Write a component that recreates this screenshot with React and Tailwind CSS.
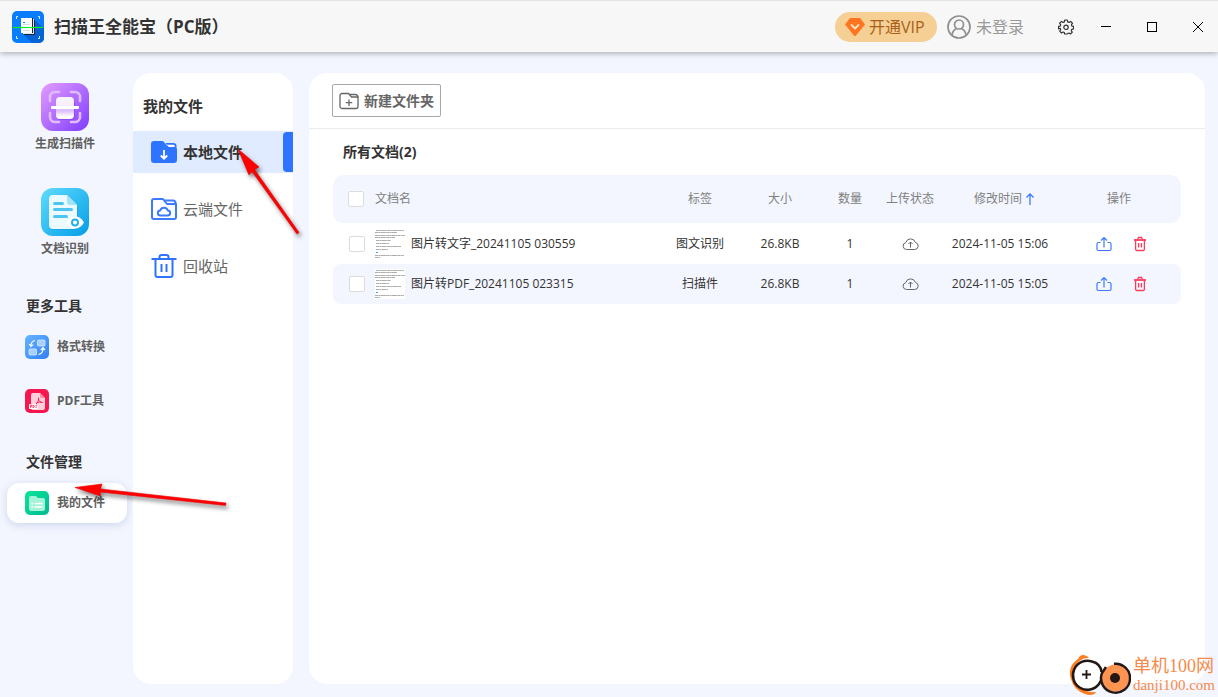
import React, { useState } from 'react';

const tools = [
  { id: 'scan', title: '生成扫描件' },
  { id: 'ocr', title: '文档识别' },
];

const folders = [
  { id: 'local', title: '本地文件' },
  { id: 'cloud', title: '云端文件' },
  { id: 'trash', title: '回收站' },
];

const files = [
  { id: 1, name: '图片转文字_20241105 030559', tag: '图文识别', size: '26.8KB', count: 1, time: '2024-11-05 15:06' },
  { id: 2, name: '图片转PDF_20241105 023315', tag: '扫描件', size: '26.8KB', count: 1, time: '2024-11-05 15:05' },
];

const LogoIcon = () => (
  <svg viewBox="0 0 32 32" className="size-8" aria-hidden="true">
    <rect width="32" height="32" rx="5" fill="#0a7dff" />
    <path d="M21 8l11 9v10a5 5 0 0 1-5 5h-7l-8-8z" fill="#0663d6" />
    <path d="M12 9h11v15H12z" fill="#1b2434" />
    <path d="M11 8h11v15H11z" fill="#dfe6ef" />
    <path d="M9 7h11v15H9z" fill="#fff" />
    <path d="M20 7h1v15h-1z" fill="#1b2434" />
    <path d="M11 11.500h2" stroke="#0a7dff" />
    <path d="M11 19.500h7M11 13.500h7" stroke="#d5dbe3" />
    <path d="M4.500 8V5.500H6M26 5.500h1.500V8M4.500 25v2.500H6M26 27.500h1.500V25" fill="none" stroke="#d5ecff" />
    <path d="M1 16.500h30" stroke="#00f020" strokeWidth="1.200" />
  </svg>
);

const ScanIcon = () => (
  <svg viewBox="0 0 48 48" className="size-12" aria-hidden="true">
    <defs>
      <linearGradient id="scanBg" x1="0" y1="0" x2="1" y2="1">
        <stop offset="0" stopColor="#e49cff" />
        <stop offset="1" stopColor="#7f3dff" />
      </linearGradient>
      <linearGradient id="scanPage" x1="0" y1="0" x2="0" y2="1">
        <stop offset="0" stopColor="#fbf5ff" />
        <stop offset="0.5" stopColor="#f4eaff" />
        <stop offset="0.6" stopColor="#d9b8ff" />
        <stop offset="0.9" stopColor="#fff" />
      </linearGradient>
    </defs>
    <rect width="48" height="48" rx="12" fill="url(#scanBg)" />
    <path d="M9 18v-4a5 5 0 0 1 5-5h4M30 9h4a5 5 0 0 1 5 5v4M39 30v4a5 5 0 0 1-5 5h-4M18 39h-4a5 5 0 0 1-5-5v-4" fill="none" stroke="#e0bcff" strokeWidth="2.600" strokeLinecap="round" />
    <rect x="16" y="16" width="18" height="21" rx="4" fill="#6b27d8" opacity="0.350" />
    <rect x="15" y="14" width="18" height="22" rx="4" fill="url(#scanPage)" />
    <rect x="10" y="23" width="28" height="3" rx="1" fill="#fff" />
  </svg>
);

const OcrIcon = () => (
  <svg viewBox="0 0 48 48" className="size-12" aria-hidden="true">
    <defs>
      <linearGradient id="ocrBg" x1="0" y1="0" x2="1" y2="1">
        <stop offset="0" stopColor="#5fdcfd" />
        <stop offset="1" stopColor="#059ee8" />
      </linearGradient>
    </defs>
    <rect width="48" height="48" rx="12" fill="url(#ocrBg)" />
    <path d="M12 9h15l10 10v19a4 4 0 0 1-4 4H13a4 4 0 0 1-4-4V12z" fill="#0784c9" opacity="0.300" />
    <path d="M12 7h14l10 10v20a4 4 0 0 1-4 4H12a4 4 0 0 1-4-4V11a4 4 0 0 1 4-4z" fill="#eafaff" />
    <path d="M26 7l10 10h-7a3 3 0 0 1-3-3z" fill="#a3e3f8" />
    <path d="M13.500 15.500h8M13.500 21.500h17M13.500 28.500h12" stroke="#4cc6f0" strokeWidth="3" strokeLinecap="round" />
    <path d="M25 34.500c4.500-8.500 13.500-8.500 18 0c-4.500 8-13.500 8-18 0z" fill="#fff" />
    <circle cx="34" cy="34.500" r="3" fill="none" stroke="#23b2ec" strokeWidth="2" />
  </svg>
);

const ConvertIcon = () => (
  <svg viewBox="0 0 24 24" className="size-6" aria-hidden="true">
    <defs>
      <linearGradient id="convertBg" x1="0" y1="0" x2="1" y2="1">
        <stop offset="0" stopColor="#67b4ff" />
        <stop offset="1" stopColor="#2f7ff5" />
      </linearGradient>
    </defs>
    <rect width="24" height="24" rx="5" fill="url(#convertBg)" />
    <rect x="12.500" y="5" width="7.500" height="6" rx="1" fill="#a8d0ff" stroke="#d6e9ff" strokeWidth="0.800" />
    <rect x="4" y="14" width="7.500" height="6" rx="1" fill="#a8d0ff" stroke="#d6e9ff" strokeWidth="0.800" />
    <path d="M10 5.500C7.500 6 6 7.800 6 11M4.200 9l1.800 2.400L8.200 9.600M13.500 19.500c3-.5 4.500-2.500 4.500-6M15.800 15l2.200-2.400L20 15" fill="none" stroke="#fff" strokeWidth="1.200" />
  </svg>
);

const PdfIcon = () => (
  <svg viewBox="0 0 24 24" className="size-6" aria-hidden="true">
    <rect width="24" height="24" rx="5" fill="#f7174f" />
    <path d="M8 4h7l5 5v10a2 2 0 0 1-2 2H8a2 2 0 0 1-2-2V6a2 2 0 0 1 2-2z" fill="#ffd0db" />
    <path d="M15 4l5 5h-3.500A1.500 1.500 0 0 1 15 7.500z" fill="#ff8ba6" />
    <path d="M13.500 8.500c.5 3-1 5-2.500 6.500M13.500 10c.5 2 2 3.500 4 3.500M11.500 14c2-1 4-1.200 6-.5" fill="none" stroke="#f7174f" strokeWidth="0.900" />
    <rect x="4" y="15" width="9" height="5" rx="1" fill="#fff" />
    <path d="M5.500 19v-3h1.200v1.500H5.500M8 16v3l1.500-1.500zM11 19v-3h1.500" fill="none" stroke="#f7174f" strokeWidth="0.700" />
  </svg>
);

const MyFilesIcon = () => (
  <svg viewBox="0 0 24 24" className="size-6" aria-hidden="true">
    <defs>
      <linearGradient id="filesBg" x1="0" y1="0" x2="1" y2="1">
        <stop offset="0" stopColor="#08e59b" />
        <stop offset="1" stopColor="#00b98f" />
      </linearGradient>
    </defs>
    <rect width="24" height="24" rx="5" fill="url(#filesBg)" />
    <path d="M6 5h5l2 2h5a2 2 0 0 1 2 2v9a2 2 0 0 1-2 2H6a2 2 0 0 1-2-2V7a2 2 0 0 1 2-2z" fill="#a4f2d8" />
    <path d="M6.500 12.500H8M9.500 12.500h8M6.500 16H8M9.500 16h8" stroke="#fff" strokeWidth="1.600" />
  </svg>
);

const LocalFolderIcon = () => (
  <svg viewBox="0 0 26 24" className="h-6 w-[26px]" aria-hidden="true">
    <path d="M3 1h9l4 4.500 10 3V20a3 3 0 0 1-3 3H3a3 3 0 0 1-3-3V4a3 3 0 0 1 3-3z" fill="#2f74ff" />
    <path d="M14.500 3h8A3 3 0 0 1 25.500 6v3h-6z" fill="#2f74ff" />
    <path d="M16 4.800h6.500a1.200 1.200 0 0 1 1.200 1.200v1h-6z" fill="#fff" />
    <path d="M13 10v8.500M9.800 15.500l3.200 3.200 3.200-3.200" fill="none" stroke="#fff" strokeWidth="1.800" />
  </svg>
);

const CloudFolderIcon = () => (
  <svg viewBox="0 0 26 24" className="h-6 w-[26px]" fill="none" stroke="#3b7bff" strokeWidth="2" strokeLinejoin="round" aria-hidden="true">
    <path d="M3 2h9l4 5h9v13a2 2 0 0 1-2 2H3a2 2 0 0 1-2-2V4a2 2 0 0 1 2-2z" />
    <path d="M13.500 3.500H22A2.500 2.500 0 0 1 24.500 6v2" />
    <path d="M9.500 18.500a2.500 2.500 0 0 1-.3-5a4 4 0 0 1 7.600 0a2.500 2.500 0 0 1-.3 5z" />
  </svg>
);

const TrashIcon = () => (
  <svg viewBox="0 0 26 26" className="size-[26px]" fill="none" stroke="#2f74ff" strokeWidth="2" aria-hidden="true">
    <path d="M0.500 6h25M8.500 5.500V4a2 2 0 0 1 2-2h5a2 2 0 0 1 2 2v1.500M4.500 6v16a2 2 0 0 0 2 2h13a2 2 0 0 0 2-2V6M10.500 11v8M15.500 11v8" />
  </svg>
);

const NewFolderIcon = () => (
  <svg viewBox="0 0 20 18" className="h-[18px] w-5" fill="none" stroke="#666" strokeWidth="1.300" strokeLinejoin="round" aria-hidden="true">
    <path d="M3 1.500h6.500l3 3.500H19v9.500a2 2 0 0 1-2 2H3a2 2 0 0 1-2-2v-11a2 2 0 0 1 2-2z" />
    <path d="M10.500 2.500H16A3 3 0 0 1 19 5.500M10 7.500v6.400M6.800 10.700h6.400" />
  </svg>
);

const UploadStateIcon = () => (
  <svg viewBox="0 0 17 14" className="mx-auto h-[14px] w-[17px]" fill="none" stroke="#666" aria-hidden="true">
    <path d="M4.500 12.500h8.200a3.600 3.600 0 0 0 .7-7.100A5 5 0 0 0 3.800 5.600a3.500 3.500 0 0 0 .7 6.900z" />
    <path d="M8.500 10.500V5M6.500 7l2-2 2 2" />
  </svg>
);

const ShareIcon = () => (
  <svg viewBox="0 0 16 16" className="size-4" fill="none" stroke="#3b7bff" strokeWidth="1.200" aria-hidden="true">
    <path d="M4.500 6.500h-2a1.500 1.500 0 0 0-1.500 1.500v5A1.500 1.500 0 0 0 2.500 14.500h11A1.500 1.500 0 0 0 15 13V8a1.500 1.500 0 0 0-1.500-1.500h-2" />
    <path d="M8 11.500V1.500M5 4.500l3-3 3 3" />
  </svg>
);

const DeleteIcon = () => (
  <svg viewBox="0 0 14 16" className="h-4 w-[14px]" fill="none" stroke="#ff3b5c" strokeWidth="1.300" aria-hidden="true">
    <path d="M1 4h12" strokeWidth="1.800" />
    <path d="M4.500 3.500L5.500 1.500h3l1 2M2.600 4v9.200a1.300 1.300 0 0 0 1.300 1.300h6.200a1.300 1.300 0 0 0 1.300-1.300V4M5.600 7v4.500M8.400 7v4.500" />
  </svg>
);

const Thumb = () => (
  <svg viewBox="0 0 30 30" className="size-[30px] shrink-0" aria-hidden="true">
    <rect width="30" height="30" fill="#fff" />
    <g fill="none" stroke="#888" strokeWidth="0.700" strokeDasharray="3 .4 2 .3 5 .5">
      <path d="M1 1.500h28M0 3.500h22M0 6.500h30M0 8.500h20M1 11.500h15M1 14.500h13M1 17.500h25M1 20.500h12M0 26.500h29M0 28.500h5" />
    </g>
    <path d="M1 23.500h2" stroke="#3ba4e8" />
  </svg>
);

const toolIcons = { scan: <ScanIcon />, ocr: <OcrIcon /> };
const folderIcons = { local: <LocalFolderIcon />, cloud: <CloudFolderIcon />, trash: <TrashIcon /> };

function TitleBar() {
  return (
    <header className="relative z-10 flex h-[52px] items-center border-t border-[#e3e3e3] bg-[#f7f7f7] pl-3 shadow-[0_1px_6px_rgba(0,0,0,0.35)]">
      <LogoIcon />
      <h1 className="ml-[10px] text-[17px] font-bold text-[#333]">扫描王全能宝（PC版）</h1>

      <div className="ml-auto flex items-center">
        <button className="flex h-[30px] w-[102px] items-center gap-1 rounded-full bg-[#f5cf94] pl-[10px] text-base whitespace-nowrap text-[#a9611a]">
          <svg viewBox="0 0 20 18" className="h-[18px] w-5 shrink-0" aria-hidden="true">
            <path d="M5 0h10l5 6.500L11 17.400a1.300 1.300 0 0 1-2 0L0 6.500z" fill="#ff7420" />
            <path d="M6.500 7l3.500 3.500L13.500 7" fill="none" stroke="#ffe3c4" strokeWidth="1.800" strokeLinecap="round" />
          </svg>
          开通VIP
        </button>
        <button className="ml-[10px] flex items-center gap-[5px] text-base text-[#999]">
          <svg viewBox="0 0 24 24" className="size-6" fill="none" stroke="#8f8f8f" strokeWidth="1.700" aria-hidden="true">
            <circle cx="12" cy="12" r="11" />
            <circle cx="12" cy="9.500" r="4.500" />
            <path d="M5 20c.5-3.500 2.500-5.500 4.500-6.300M19 20c-.5-3.500-2.500-5.500-4.500-6.300" />
          </svg>
          未登录
        </button>
        <button aria-label="设置" className="ml-[22px] flex h-8 w-10 items-center justify-center">
          <svg viewBox="0 0 16 16" className="size-4" fill="none" stroke="#333" strokeWidth="1.200" strokeLinejoin="round" aria-hidden="true">
            <path d="M6.700 1h2.600l.4 1.900 1.300.5 1.600-1 1.900 1.800-1.100 1.600.5 1.300 1.700.3v2.500l-1.800.4-.5 1.300 1 1.600-1.800 1.800-1.500-1-1.300.5L9.300 15H6.700l-.4-1.500-1.300-.5-1.500 1-1.800-1.800 1-1.600-.5-1.300L.5 9.900V7.400l1.700-.3.500-1.300-1.100-1.600 1.900-1.800 1.600 1 1.300-.5z" />
            <circle cx="8" cy="8.300" r="2.200" />
          </svg>
        </button>
        <button aria-label="最小化" className="flex h-8 w-10 items-center justify-center">
          <span className="h-px w-[10px] bg-black" />
        </button>
        <button aria-label="最大化" className="flex h-8 w-[52px] items-center justify-center">
          <span className="size-[10px] border border-black" />
        </button>
        <button aria-label="关闭" className="flex h-8 w-10 items-center justify-center">
          <svg viewBox="0 0 10 10" className="size-[10px]" stroke="#000" aria-hidden="true">
            <path d="M0 0l10 10M10 0L0 10" />
          </svg>
        </button>
      </div>
    </header>
  );
}

function Sidebar() {
  return (
    <nav className="w-[133px] shrink-0 pt-[10px] pr-[6px] pl-[7px] text-xs font-bold text-[#606060]">
      <div className="flex flex-col items-center gap-[34px] pr-1">
        {tools.map((tool) => (
          <button key={tool.id} className="flex flex-col items-center gap-[3px] leading-5">
            {toolIcons[tool.id]}
            {tool.title}
          </button>
        ))}
      </div>

      <h2 className="mt-[37px] pl-[19px] text-sm leading-5 text-[#333]">更多工具</h2>
      <div className="mt-[11px] flex flex-col gap-[14px]">
        <button className="flex h-10 items-center gap-2 pl-[18px]">
          <ConvertIcon />
          格式转换
        </button>
        <button className="flex h-10 items-center gap-2 pl-[18px]">
          <PdfIcon />
          PDF工具
        </button>
      </div>

      <h2 className="mt-[31px] pl-[19px] text-sm leading-5 text-[#333]">文件管理</h2>
      <button className="mt-[11px] flex h-10 w-full items-center gap-2 rounded-xl bg-white pl-[18px] shadow-[0_2px_8px_rgba(120,140,200,0.3)]">
        <MyFilesIcon />
        我的文件
      </button>
    </nav>
  );
}

function FolderPanel({ active, onSelect }) {
  return (
    <section className="w-40 shrink-0 rounded-[18px] bg-white pt-[21px]">
      <h2 className="pl-[10px] text-[15px] leading-6 font-bold text-[#333]">我的文件</h2>
      <div className="mt-[13px] flex flex-col gap-[15px]">
        {folders.map((folder) => (
          <button
            key={folder.id}
            onClick={() => onSelect(folder.id)}
            className={`flex h-[42px] items-center gap-[6px] pl-[18px] text-[15px] ${
              active === folder.id ? 'bg-[#e1ebff] font-bold text-[#333]' : 'text-[#666]'
            }`}
          >
            {folderIcons[folder.id]}
            {folder.title}
            {active === folder.id && <span className="ml-auto h-10 w-[10px] rounded-l bg-[#2f74ff]" />}
          </button>
        ))}
      </div>
    </section>
  );
}

const checkboxClass = 'block size-4 appearance-none rounded-xs border border-[#dcdcdc] bg-white checked:bg-[#2f74ff]';

function FileTable() {
  return (
    <table className="w-full table-fixed border-separate border-spacing-0 text-center text-xs text-[#333]">
      <colgroup>
        <col className="w-[42px]" />
        <col />
        <col className="w-[90px]" />
        <col className="w-[70px]" />
        <col className="w-[70px]" />
        <col className="w-[50px]" />
        <col className="w-[130px]" />
        <col className="w-[116px]" />
      </colgroup>
      <thead className="text-[#808080] [&_th]:h-[49px] [&_th]:border-b [&_th]:border-transparent [&_th]:bg-[#f3f6fe] [&_th]:bg-clip-padding [&_th]:p-0 [&_th]:font-normal">
        <tr>
          <th className="rounded-l-[10px]">
            <input type="checkbox" aria-label="全选" className={`ml-[15px] ${checkboxClass}`} />
          </th>
          <th className="text-left">文档名</th>
          <th>标签</th>
          <th>大小</th>
          <th>数量</th>
          <th className="whitespace-nowrap">上传状态</th>
          <th>
            <button className="inline-flex items-center gap-1 pl-2">
              修改时间
              <svg viewBox="0 0 8 12" className="h-3 w-2" fill="none" stroke="#3b7bff" strokeWidth="1.300" aria-hidden="true">
                <path d="M4 12V1M0.500 4.500L4 1l3.500 3.500" />
              </svg>
            </button>
          </th>
          <th className="rounded-r-[10px]">
            <span className="pr-2">操作</span>
          </th>
        </tr>
      </thead>
      <tbody>
        {files.map((file) => (
          <tr key={file.id} className="[&>td]:h-10 [&>td]:p-0 even:[&>td]:bg-[#f3f6fe]">
            <td className="rounded-l-lg">
              <input type="checkbox" aria-label={file.name} className={`ml-4 ${checkboxClass}`} />
            </td>
            <td>
              <div className="flex items-center gap-[6px] whitespace-nowrap">
                <Thumb />
                {file.name}
              </div>
            </td>
            <td>{file.tag}</td>
            <td>{file.size}</td>
            <td>{file.count}</td>
            <td>
              <UploadStateIcon />
            </td>
            <td>{file.time}</td>
            <td className="rounded-r-lg">
              <div className="flex items-center justify-center gap-[21px] pr-[3px]">
                <button aria-label="分享">
                  <ShareIcon />
                </button>
                <button aria-label="删除">
                  <DeleteIcon />
                </button>
              </div>
            </td>
          </tr>
        ))}
      </tbody>
    </table>
  );
}

// Red hint arrows that float above the panels
const HintArrows = () => (
  <svg viewBox="0 0 320 520" className="pointer-events-none absolute top-0 left-0 z-20 h-[520px] w-80 drop-shadow-[2px_3px_2px_rgba(0,0,0,0.5)]" aria-hidden="true">
    <g fill="#f00" stroke="#e80000" strokeWidth="0.600">
      <path d="M238 149L259 167L254.500 169.500L299 232.500L297 234L252 171.500L249 175z" />
      <path d="M75 487.500L102 484L100.500 489L226 503L225.500 505.500L100 492L100.500 496z" />
    </g>
  </svg>
);

const Watermark = () => (
  <a href="#danji100" className="absolute right-[3px] bottom-px z-20 flex items-center gap-[2px] text-[#f58a4b]">
    <svg viewBox="0 0 62 42" className="h-[42px] w-[62px]" fill="none" aria-hidden="true">
      <path d="M20 4C15-1 11 1 9 5C2 10-1 17 2 25C4 33 10 38 16 40C21 42 26 41 27 38C18 39 9 34 6 26C3 17 6 10 12 6C15 4 18 4 20 4z" fill="#ff7d1f" />
      <circle cx="18" cy="20.500" r="13.500" fill="#fff" />
      <path d="M23 7.500A14.500 14.500 0 1 0 30 30L33 25M23 7.500C29 9 32 13 32.500 18" stroke="#231815" strokeWidth="2.500" />
      <circle cx="46.500" cy="24" r="13.500" fill="#ff9350" />
      <path d="M45 9.800A14.500 14.500 0 1 1 33 19L37 13" stroke="#231815" strokeWidth="2.500" />
      <circle cx="46" cy="24" r="5" fill="#231815" />
      <path d="M17.500 16v9M13 20.500h9" stroke="#231815" strokeWidth="1.800" />
    </svg>
    <span className="font-['Liberation_Serif','Noto_Sans_CJK_SC',serif]">
      <span className="block text-lg leading-5">单机100网</span>
      <span className="block text-[15px] leading-[18px]">danji100.com</span>
    </span>
  </a>
);

function App() {
  const [folder, setFolder] = useState('local');

  return (
    <div className="relative flex min-h-screen flex-col bg-[#f3f6fe] font-['Open_Sans','Noto_Sans_CJK_SC',sans-serif]">
      <TitleBar />

      <div className="flex flex-1 pt-[21px] pr-[13px] pb-[13px]">
        <Sidebar />
        <FolderPanel active={folder} onSelect={setFolder} />

        <main className="ml-4 min-w-0 flex-1 rounded-[18px] bg-white">
          <div className="flex h-14 items-center border-b border-[#ebebeb] px-[23px]">
            <button className="flex h-[33px] items-center gap-[5px] rounded-xs border border-[#a8a8a8] px-[6px] text-sm font-bold text-[#666]">
              <NewFolderIcon />
              新建文件夹
            </button>
          </div>
          <div className="px-6">
            <h2 className="py-3 pl-[10px] text-sm leading-[22px] font-bold text-[#333]">所有文档(2)</h2>
            <FileTable />
          </div>
        </main>
      </div>

      <HintArrows />
      <Watermark />
    </div>
  );
}

export default App;
